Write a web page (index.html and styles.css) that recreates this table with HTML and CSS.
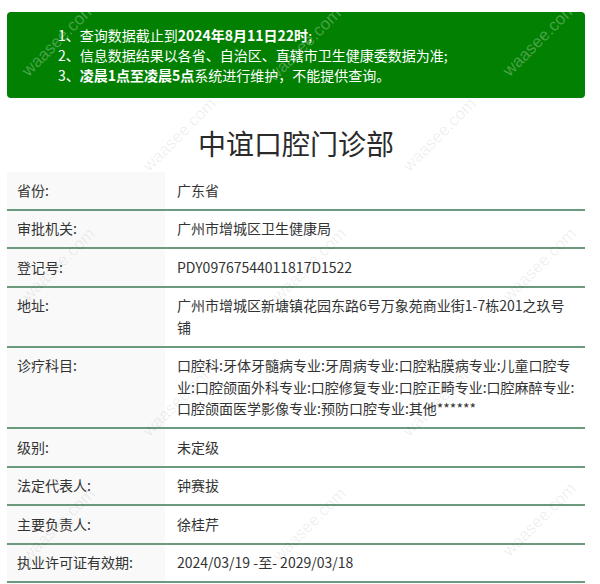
FILE: index.html
```html
<!DOCTYPE html>
<html lang="zh-CN">
<head>
<meta charset="utf-8">
<title>中谊口腔门诊部</title>
<link rel="stylesheet" href="styles.css">
</head>
<body>
<div class="page">
  <div class="notice">
    <p>1、查询数据截止到<b>2024年8月11日22时</b>;</p>
    <p>2、信息数据结果以各省、自治区、直辖市卫生健康委数据为准;</p>
    <p>3、<b>凌晨1点至凌晨5点</b>系统进行维护，不能提供查询。</p>
  </div>
  <h1 class="title">中谊口腔门诊部</h1>
  <div class="info">
    <div class="row"><div class="label">省份:</div><div class="value">广东省</div></div>
    <div class="row"><div class="label">审批机关:</div><div class="value">广州市增城区卫生健康局</div></div>
    <div class="row"><div class="label">登记号:</div><div class="value">PDY09767544011817D1522</div></div>
    <div class="row"><div class="label">地址:</div><div class="value">广州市增城区新塘镇花园东路6号万象苑商业街1-7栋201之玖号<br>铺</div></div>
    <div class="row"><div class="label">诊疗科目:</div><div class="value">口腔科:牙体牙髓病专业:牙周病专业:口腔粘膜病专业:儿童口腔专<br>业:口腔颌面外科专业:口腔修复专业:口腔正畸专业:口腔麻醉专业:<br>口腔颌面医学影像专业:预防口腔专业:其他******</div></div>
    <div class="row"><div class="label">级别:</div><div class="value">未定级</div></div>
    <div class="row"><div class="label">法定代表人:</div><div class="value">钟赛拔</div></div>
    <div class="row"><div class="label">主要负责人:</div><div class="value">徐桂芹</div></div>
    <div class="row"><div class="label">执业许可证有效期:</div><div class="value">2024/03/19 -至- 2029/03/18</div></div>
  </div>
  <div class="marks" aria-hidden="true">
    <span class="wm wm-light" style="left:4px;top:30px">waasee.com</span>
    <span class="wm wm-light" style="left:250px;top:35px">waasee.com</span>
    <span class="wm wm-light" style="left:485px;top:30px">waasee.com</span>
    <span class="wm" style="left:125px;top:125px">waasee.com</span>
    <span class="wm" style="left:385px;top:125px">waasee.com</span>
    <span class="wm" style="left:4px;top:255px">waasee.com</span>
    <span class="wm" style="left:255px;top:255px">waasee.com</span>
    <span class="wm" style="left:485px;top:255px">waasee.com</span>
    <span class="wm" style="left:125px;top:390px">waasee.com</span>
    <span class="wm" style="left:385px;top:390px">waasee.com</span>
    <span class="wm" style="left:4px;top:515px">waasee.com</span>
    <span class="wm" style="left:255px;top:515px">waasee.com</span>
    <span class="wm" style="left:485px;top:510px">waasee.com</span>
  </div>
</div>
</body>
</html>
```
FILE: styles.css
```css
html, body {
  margin: 0;
  padding: 0;
  background: #ffffff;
}
body {
  font-family: "Noto Sans CJK SC", "Noto Sans", sans-serif;
  color: #333333;
  font-size: 14px;
}
.page {
  position: relative;
  width: 578px;
  margin: 0 0 0 7px;
  padding-top: 12px;
  overflow: hidden;
}
.notice {
  background: #018001;
  color: #ffffff;
  border-radius: 4px;
  padding: 13px 0 13px 51px;
}
.notice p {
  margin: 0;
  line-height: 20px;
  font-size: 14px;
}
.notice b {
  font-weight: 700;
}
.title {
  margin: 25px 0 9px;
  text-align: center;
  font-weight: 400;
  font-size: 28px;
  line-height: 40px;
  color: #2a2a2a;
}
.info {
  display: flex;
  flex-direction: column;
}
.row {
  display: flex;
  border-bottom: 2px solid #6b9a7e;
}
.label {
  width: 148px;
  flex: none;
  background: #f9f9f9;
  padding: 7.5px 0 7.5px 10px;
  line-height: 21.5px;
}
.value {
  flex: 1;
  padding: 7.5px 4px 7.5px 12px;
  line-height: 21.5px;
  white-space: nowrap;
}
.marks {
  position: absolute;
  inset: 0;
  pointer-events: none;
}
.wm {
  position: absolute;
  font-family: "Liberation Sans", Arial, sans-serif;
  font-size: 17px;
  color: rgba(0, 0, 0, 0.07);
  transform: rotate(-45deg);
  transform-origin: center;
  white-space: nowrap;
}
.wm-light {
  color: rgba(255, 255, 255, 0.28);
}
```
